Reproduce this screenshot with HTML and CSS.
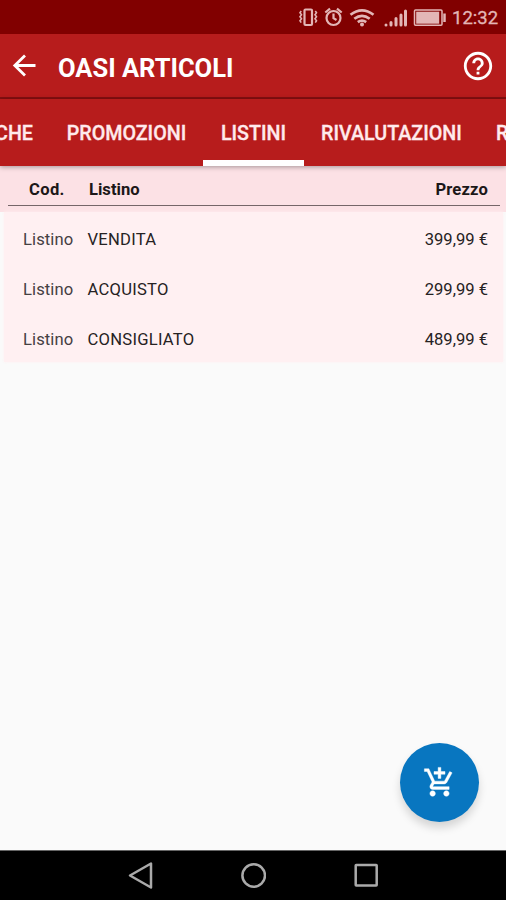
FILE: index.html
```
<!DOCTYPE html>
<html lang="it">
<head>
<meta charset="utf-8">
<title>Oasi Articoli</title>
<link rel="stylesheet" href="styles.css">
</head>
<body>
<div class="app">
  <div class="status">
    <svg class="status-icons" width="150" height="34" viewBox="0 0 150 34" fill="none" stroke="#e3b6b6" stroke-width="2.200">
      <rect x="5.500" y="9.500" width="7.500" height="15.500" rx="1"/>
      <path stroke-width="1.600" d="M2.200 11l-1.200 1.800 1.500 2-1.500 2 1.500 2-1.500 2 1.200 1.800M16.300 11l1.200 1.800-1.500 2 1.500 2-1.500 2 1.500 2-1.200 1.800"/>
      <circle cx="34.500" cy="18" r="7"/>
      <path d="M26.300 12.500l4.700-3.800M42.700 12.500l-4.700-3.800M34.500 13.500v4.700l3 1.800"/>
      <path stroke-width="2.700" d="M51.500 14.800q11.500-9 23 0M55.300 18.800q7.700-6 15.400 0M58.800 22.200q4.200-3 8.400 0"/>
      <circle cx="63" cy="24.500" r="2" fill="#e3b6b6" stroke="none"/>
      <path stroke-width="3" stroke-linecap="round" d="M87 25v0M92 25v-2.500M97 25v-6.500M102 25v-10M106.500 25v-14"/>
      <rect x="115.500" y="10" width="27.500" height="15.300" rx="1" stroke-width="1.500"/>
      <rect x="117.200" y="11.700" width="23" height="12" fill="#e3b6b6" stroke="none"/>
      <path stroke-width="2.500" d="M145.500 13.500v8.500"/>
    </svg>
    <span class="clock">12:32</span>
  </div>
  <div class="toolbar">
    <svg class="back" width="25" height="24" viewBox="0 0 25 24" fill="none" stroke="#fff" stroke-width="2.800"><path d="M23.500 11.500H3M13 1.500L2.800 11.500 13 21.500"/></svg>
    <h1 class="title">OASI ARTICOLI</h1>
    <svg class="help" width="34" height="34" viewBox="0 0 24 24" fill="#fff"><path d="M11 18h2v-2h-2v2zm1-16C6.480 2 2 6.480 2 12s4.480 10 10 10 10-4.480 10-10S17.520 2 12 2zm0 18c-4.410 0-8-3.590-8-8s3.590-8 8-8 8 3.590 8 8-3.590 8-8 8zm0-14c-2.210 0-4 1.790-4 4h2c0-1.100.9-2 2-2s2 .9 2 2c0 2-3 1.750-3 5h2c0-2.250 3-2.500 3-5 0-2.210-1.790-4-4-4z"/></svg>
  </div>
  <div class="tabs">
    <div class="tab tab-first"><span>CHE</span></div>
    <div class="tab tab-promo"><span>PROMOZIONI</span></div>
    <div class="tab tab-active"><span>LISTINI</span></div>
    <div class="tab tab-rival"><span>RIVALUTAZIONI</span></div>
    <div class="tab tab-last"><span>R</span></div>
  </div>
  <div class="content">
    <div class="thead"><div class="thead-line"><b class="code">Cod.</b><b class="name">Listino</b><b class="price">Prezzo</b></div></div>
    <div class="rows">
      <div class="row"><span class="code">Listino</span><span class="name">VENDITA</span><span class="price">399,99 €</span></div>
      <div class="row"><span class="code">Listino</span><span class="name">ACQUISTO</span><span class="price">299,99 €</span></div>
      <div class="row"><span class="code">Listino</span><span class="name">CONSIGLIATO</span><span class="price">489,99 €</span></div>
    </div>
    <div class="fab"><svg width="33" height="33" viewBox="0 0 24 24" fill="#fff" stroke="#fff" stroke-width=".3"><path d="M11 9h2V6h3V4h-3V1h-2v3H8v2h3v3zm-4 9c-1.100 0-1.990.9-1.990 2S5.900 22 7 22s2-.9 2-2-.9-2-2-2zm10 0c-1.100 0-1.990.9-1.990 2s.89 2 1.990 2 2-.9 2-2-.9-2-2-2zm-9.830-3.250l.03-.12.9-1.630h7.450c.75 0 1.410-.41 1.750-1.030l3.860-7.010L19.420 4h-.01l-1.100 2-2.760 5H8.530l-.13-.27L6.160 6l-.95-2-.94-2H1v2h2l3.600 7.590-1.350 2.450c-.16.28-.25.61-.25.960 0 1.100.9 2 2 2h12v-2H7.420c-.13 0-.25-.11-.25-.25z"/></svg></div>
  </div>
  <div class="nav">
    <svg width="26" height="28" viewBox="0 0 26 28"><path d="M3 13.500L24 1.500v24z"/></svg>
    <svg width="26" height="28" viewBox="0 0 26 28"><circle cx="13.700" cy="13.500" r="11.300"/></svg>
    <svg width="26" height="28" viewBox="0 0 26 28"><rect x="2.700" y="3" width="21" height="20.600" rx=".5"/></svg>
  </div>
</div>
</body>
</html>
```
FILE: styles.css
```
* { box-sizing: border-box; }
body { margin: 0; font-family: Roboto, "Liberation Sans", sans-serif; }
.app { width: 506px; height: 900px; display: flex; flex-direction: column; overflow: hidden; background: #fafafa; }
.status { height: 34px; flex: none; display: flex; align-items: center; background: #810000; padding-left: 299px; }
.status-icons { flex: none; }
.clock { margin-left: 3px; padding-top: 2px; font-size: 18.500px; color: #e3b6b6; -webkit-text-stroke: .3px #e3b6b6; white-space: nowrap; }
.toolbar { height: 65px; flex: none; display: flex; align-items: center; background: #b71c1c; border-bottom: 2px solid #860f10; padding: 0 11px 0 12px; }
.title { margin: 4px 0 0 21px; font-size: 25.500px; line-height: 30px; font-weight: 700; color: #fff; flex: 1; white-space: nowrap; }
.help { flex: none; }
.tabs { height: 67px; flex: none; display: flex; background: #b71c1c; box-shadow: 0 1px 5px rgba(0,0,0,.35); position: relative; z-index: 1; }
.tab { flex: none; display: flex; justify-content: center; align-items: center; padding-top: 1px; border-bottom: 6px solid transparent; border-top: 6px solid transparent; font-size: 19.700px; font-weight: 500; color: #ffeaec; -webkit-text-stroke: .3px #ffeaec; white-space: nowrap; }
.tab-first { width: 50px; justify-content: flex-end; padding-right: 17px; }
.tab-promo { width: 153px; }
.tab-active { width: 101px; border-bottom-color: #fff; }
.tab-rival { width: 175px; }
.tab-last { width: 50px; justify-content: flex-start; padding-left: 17px; }
.content { flex: 1; position: relative; }
.thead { height: 46px; padding: 0 6px 7px 8px; background: #fce1e5; font-size: 16.600px; color: #1c1718; }
.thead-line { height: 40px; display: flex; align-items: center; padding: 7px 12px 0 0; border-bottom: 1px solid #756568; }
.thead .code { width: 81px; padding-left: 21px; letter-spacing: .35px; }
.thead .price { letter-spacing: .15px; }
.name { flex: 1; }
.rows { margin: 0 3px 0 4px; height: 150px; padding-top: 2px; background: #fff0f2; box-shadow: 0 0 3px #fff0f2; }
.row { height: 50px; display: flex; align-items: center; padding: 0 15px 0 19px; font-size: 16.600px; color: #262223; }
.row .code { width: 64.500px; color: #454042; letter-spacing: .1px; }
.row .name { letter-spacing: .25px; }
.fab { position: absolute; left: 400px; top: 577px; width: 79px; height: 79px; border-radius: 50%; background: #0876c0; display: flex; align-items: center; justify-content: center; box-shadow: 0 6px 9px rgba(0,0,0,.15); }
.nav { height: 50px; flex: none; display: flex; justify-content: center; align-items: center; gap: 87px; background: #000; border-top: 1px solid #666; }
.nav svg { fill: none; stroke: #aaa; stroke-width: 2.500; stroke-linejoin: round; }
```
